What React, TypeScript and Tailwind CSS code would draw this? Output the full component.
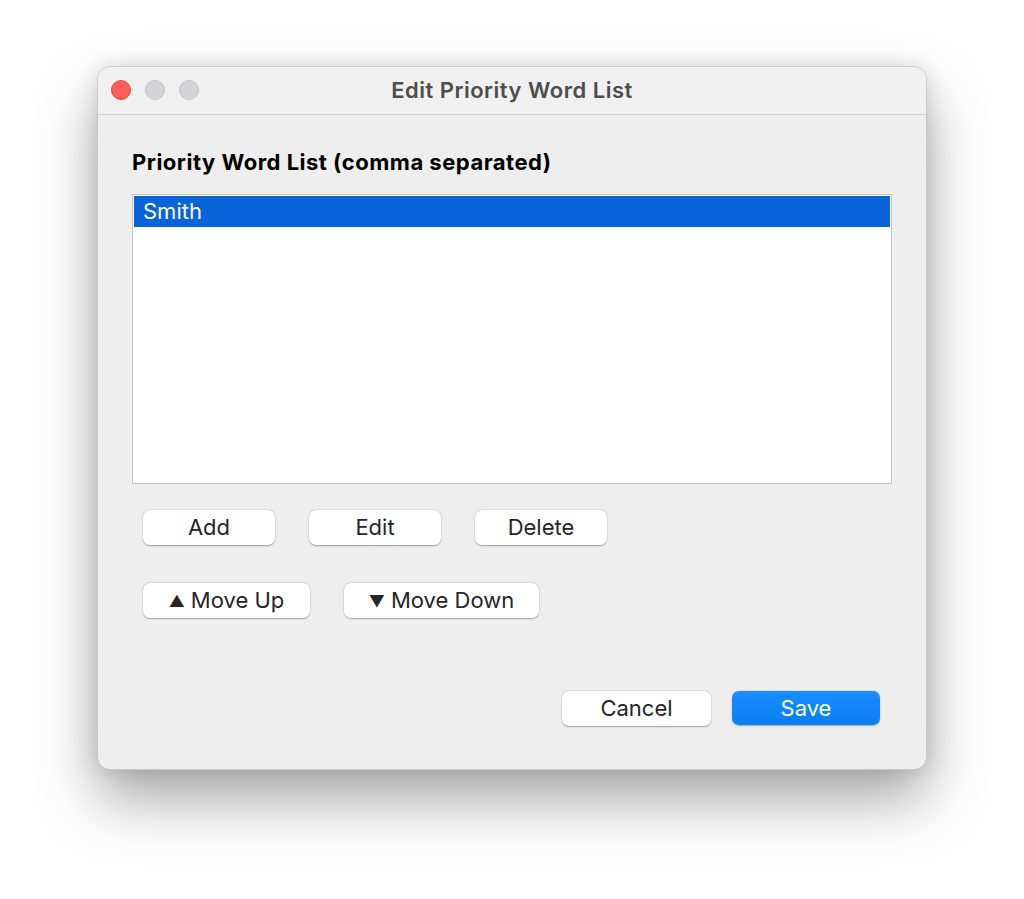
import React from "react";

const font = { fontFamily: "Inter, 'Liberation Sans', sans-serif" };

function Btn({ children, className = "" }: { children: React.ReactNode; className?: string }) {
  return (
    <button
      className={`h-[35px] rounded-[7px] bg-white text-[22px] text-[#262626] shadow-[0_0.5px_1.5px_rgba(0,0,0,0.3),0_0_0_0.5px_rgba(0,0,0,0.06)] flex items-center justify-center ${className}`}
    >
      {children}
    </button>
  );
}

export default function App() {
  return (
    <div className="w-[1024px] h-[899px] bg-white pt-[66px] pl-[97px]" style={font}>
      <div className="w-[830px] h-[704px] rounded-[13px] bg-[#eeeeee] border border-[#c9c9c9] shadow-[0_30px_60px_rgba(0,0,0,0.35),0_0_20px_rgba(0,0,0,0.12)] overflow-hidden flex flex-col">
        {/* title bar */}
        <div className="relative h-[48px] shrink-0 bg-[#f0f0f1] border-b border-[#d3d3d3] flex items-center justify-center">
          <div className="absolute left-[13px] top-[13px] flex gap-[14px]">
            <span className="w-[20px] h-[20px] rounded-full bg-[#fe5f57] border border-[#e2463f]" />
            <span className="w-[20px] h-[20px] rounded-full bg-[#d4d4d6] border border-[#c6c6c8]" />
            <span className="w-[20px] h-[20px] rounded-full bg-[#d4d4d6] border border-[#c6c6c8]" />
          </div>
          <span className="text-[22px] font-semibold text-[#4d4d4d] tracking-[0.5px]">Edit Priority Word List</span>
        </div>

        <div className="flex-1 pl-[34px] pr-[35px] pt-[33px]">
          <div className="text-[22px] font-bold text-black leading-[28px] tracking-[0.5px]">Priority Word List (comma separated)</div>

          <div className="mt-[18px] w-[760px] h-[290px] bg-white border border-[#c4c4c4] p-[1px]">
            <div className="h-[31px] bg-[#0a64d9] text-white text-[22px] pl-[9px] flex items-center">Smith</div>
          </div>

          <div className="mt-[26px] ml-[11px] flex gap-[34px]">
            <Btn className="w-[132px]">Add</Btn>
            <Btn className="w-[132px]">Edit</Btn>
            <Btn className="w-[132px]">Delete</Btn>
          </div>

          <div className="mt-[38px] ml-[11px] flex gap-[34px]">
            <Btn className="w-[167px] gap-[6px]">
              <span className="text-[16px]">▲</span>Move Up
            </Btn>
            <Btn className="w-[195px] gap-[6px]">
              <span className="text-[16px]">▼</span>Move Down
            </Btn>
          </div>

          <div className="mt-[73px] flex justify-end gap-[21px] pr-[11px]">
            <Btn className="w-[149px]">Cancel</Btn>
            <button className="w-[148px] h-[34px] rounded-[7px] bg-[linear-gradient(#1a8eff,#0a7ef7)] text-white text-[22px] shadow-[0_0.5px_1.5px_rgba(0,0,0,0.3)]">
              Save
            </button>
          </div>
        </div>
      </div>
    </div>
  );
}
